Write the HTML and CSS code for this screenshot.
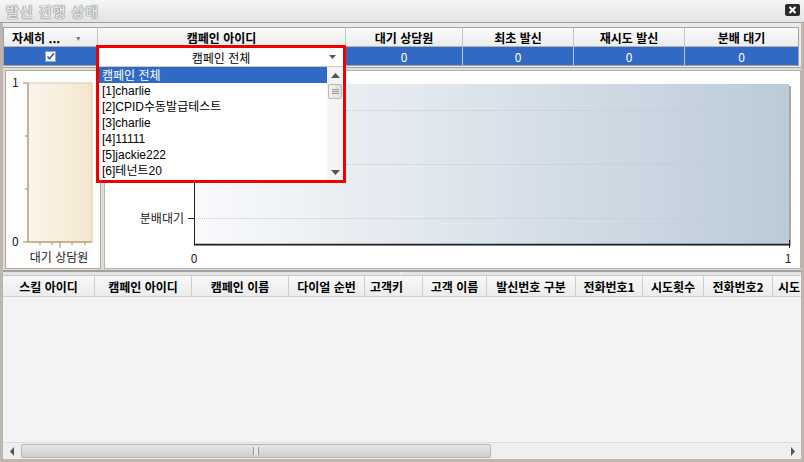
FILE: index.html
```html
<!DOCTYPE html>
<html lang="ko">
<head>
  <meta charset="UTF-8">
  <title>발신 진행 상태</title>
  <link rel="stylesheet" href="styles.css">
</head>
<body>
  <div class="window">
    <div class="titlebar">
      <span class="title">발신 진행 상태</span>
      <span class="close-btn">
        <svg width="15" height="12" viewBox="0 0 15 12"><rect x="0" y="0" width="15" height="12" rx="2" fill="#2b2b2b"/><path d="M4.5 3 L10.5 9 M10.5 3 L4.5 9" stroke="#fff" stroke-width="2"/></svg>
      </span>
    </div>

    <div class="frame">
      <div class="summary">
        <div class="row head">
          <div class="cell detail-col">자세히 ... <span class="sort">▾</span></div>
          <div class="cell">캠페인 아이디</div>
          <div class="cell">대기 상담원</div>
          <div class="cell">최초 발신</div>
          <div class="cell">재시도 발신</div>
          <div class="cell">분배 대기</div>
        </div>
        <div class="row data">
          <div class="cell"><span class="check">
            <svg width="9" height="9" viewBox="0 0 9 9"><path d="M1.5 4.5 L3.5 6.8 L7.8 1.6" stroke="#2a55b8" stroke-width="1.6" fill="none"/></svg>
          </span></div>
          <div class="cell"></div>
          <div class="cell">0</div>
          <div class="cell">0</div>
          <div class="cell">0</div>
          <div class="cell">0</div>
        </div>
      </div>

      <div class="charts">
        <div class="side-panel">
          <svg width="94" height="196" viewBox="0 0 94 196">
            <defs>
              <linearGradient id="beige" x1="0" y1="0" x2="1" y2="0">
                <stop offset="0" stop-color="#fbf6ec"/>
                <stop offset="1" stop-color="#f4e6cd"/>
              </linearGradient>
            </defs>
            <rect x="22" y="12" width="64" height="159" fill="url(#beige)" stroke="#dcc9a6"/>
            <line x1="22" y1="12" x2="22" y2="171" stroke="#a8895a"/>
            <line x1="17" y1="12" x2="22" y2="12" stroke="#a8895a"/>
            <line x1="19" y1="65" x2="22" y2="65" stroke="#a8895a"/>
            <line x1="19" y1="118" x2="22" y2="118" stroke="#a8895a"/>
            <line x1="17" y1="171" x2="86" y2="171" stroke="#a8895a"/>
            <line x1="34" y1="171" x2="34" y2="174" stroke="#a8895a"/>
            <line x1="46" y1="171" x2="46" y2="174" stroke="#a8895a"/>
            <line x1="54" y1="171" x2="54" y2="177" stroke="#a8895a"/>
            <line x1="66" y1="171" x2="66" y2="174" stroke="#a8895a"/>
            <line x1="79" y1="171" x2="79" y2="174" stroke="#a8895a"/>
            <text x="6" y="16" class="axis-text">1</text>
            <text x="6" y="175" class="axis-text">0</text>
            <text x="53" y="191" class="axis-text" text-anchor="middle">대기 상담원</text>
          </svg>
        </div>
        <div class="main-panel">
          <svg width="694" height="198" viewBox="0 0 694 198">
            <defs>
              <linearGradient id="plot" x1="0" y1="0" x2="1" y2="0">
                <stop offset="0" stop-color="#f9fafc"/>
                <stop offset="1" stop-color="#bccbd9"/>
              </linearGradient>
            </defs>
            <rect x="91" y="15" width="595" height="160" fill="#a6a6a6"/>
            <rect x="89" y="13" width="595" height="160" fill="url(#plot)"/>
            <line x1="89" y1="39.5" x2="684" y2="39.5" class="grid-line"/>
            <line x1="89" y1="93.5" x2="684" y2="93.5" class="grid-line"/>
            <line x1="89" y1="147.5" x2="684" y2="147.5" class="grid-line"/>
            <line x1="89.5" y1="13" x2="89.5" y2="175" stroke="#222"/>
            <line x1="89" y1="173.5" x2="685" y2="173.5" stroke="#222" stroke-width="1.5"/>
            <line x1="684.5" y1="169" x2="684.5" y2="177" stroke="#222"/>
            <line x1="83" y1="39.5" x2="89" y2="39.5" stroke="#222"/>
            <line x1="83" y1="93.5" x2="89" y2="93.5" stroke="#222"/>
            <line x1="83" y1="147.5" x2="89" y2="147.5" stroke="#222"/>
            <text x="79" y="152" class="axis-text" text-anchor="end">분배대기</text>
            <text x="89" y="192" class="axis-text" text-anchor="middle">0</text>
            <text x="683" y="192" class="axis-text" text-anchor="middle">1</text>
          </svg>
        </div>
      </div>

      <div class="splitter"><span class="grip"></span></div>

      <div class="detail">
        <div class="detail-head">
          <div class="hcell w90">스킬 아이디</div>
          <div class="hcell w97">캠페인 아이디</div>
          <div class="hcell w97">캠페인 이름</div>
          <div class="hcell w76">다이얼 순번</div>
          <div class="hcell w58 left">고객키</div>
          <div class="hcell w64">고객 이름</div>
          <div class="hcell w89">발신번호 구분</div>
          <div class="hcell w67">전화번호1</div>
          <div class="hcell w61">시도횟수</div>
          <div class="hcell w69">전화번호2</div>
          <div class="hcell w40 left">시도</div>
        </div>
        <div class="detail-body"></div>
        <div class="hscroll">
          <span class="arrow">
            <svg width="5" height="9" viewBox="0 0 5 9"><path d="M4 0 L0 4.5 L4 9 Z" fill="#555"/></svg>
          </span>
          <span class="track">
            <span class="thumb"><span class="thumb-grip"></span></span>
          </span>
          <span class="arrow">
            <svg width="5" height="9" viewBox="0 0 5 9"><path d="M1 0 L5 4.5 L1 9 Z" fill="#555"/></svg>
          </span>
        </div>
      </div>
    </div>

    <div class="campaign-drop">
      <div class="combo">
        <span class="combo-text">캠페인 전체</span>
        <span class="combo-arrow">
          <svg width="7" height="4" viewBox="0 0 7 4"><path d="M0 0 L7 0 L3.5 4 Z" fill="#555"/></svg>
        </span>
      </div>
      <div class="list">
        <ul class="items">
          <li class="selected">캠페인 전체</li>
          <li>[1]charlie</li>
          <li>[2]CPID수동발급테스트</li>
          <li>[3]charlie</li>
          <li>[4]11111</li>
          <li>[5]jackie222</li>
          <li>[6]테넌트20</li>
        </ul>
        <div class="vscroll">
          <span class="vbtn">
            <svg width="9" height="5" viewBox="0 0 9 5"><path d="M0 5 L4.5 0 L9 5 Z" fill="#555"/></svg>
          </span>
          <span class="vthumb">
            <svg width="7" height="5" viewBox="0 0 7 5"><path d="M0 0.5 H7 M0 2.5 H7 M0 4.5 H7" stroke="#999"/></svg>
          </span>
          <span class="vtrack"></span>
          <span class="vbtn">
            <svg width="9" height="5" viewBox="0 0 9 5"><path d="M0 0 L9 0 L4.5 5 Z" fill="#555"/></svg>
          </span>
        </div>
      </div>
    </div>
  </div>
</body>
</html>
```

FILE: styles.css
```css
* {
  box-sizing: border-box;
}
body {
  margin: 0;
  font-family: "Noto Sans CJK KR", "DejaVu Sans", sans-serif;
  font-size: 12px;
  color: #000;
  background: #fff;
}
.window {
  position: relative;
  width: 804px;
  height: 462px;
  background: #ececec;
  overflow: hidden;
}
.titlebar {
  height: 23px;
  display: flex;
  align-items: center;
  justify-content: space-between;
  padding: 0 4px 0 6px;
  background: linear-gradient(#f6f6f6, #e3e3e3);
  border-bottom: 1px solid #9e9e9e;
}
.title {
  font-size: 14px;
  font-weight: bold;
  color: #e6e6e6;
  text-shadow: 0 0 1px #6a6a6a, 0 0 1px #6a6a6a;
  letter-spacing: 1px;
}
.close-btn {
  display: flex;
  margin-top: -3px;
}
.frame {
  height: 439px;
  padding: 4px 0 0 0;
  border-left: 3px solid #bdb6ae;
  border-right: 3px solid #bdb6ae;
  border-bottom: 3px solid #bdb6ae;
  display: flex;
  flex-direction: column;
  background: #e9e9e9;
}
.summary {
  border: 1px solid #a4a4a4;
  margin-right: 2px;
  background: #fff;
}
.row {
  display: grid;
  grid-template-columns: 94px 248px 117px 111px 111px 113px;
}
.row .cell {
  display: flex;
  align-items: center;
  justify-content: center;
  border-right: 1px solid #c4c4c4;
}
.row .cell:last-child {
  border-right: none;
}
.head {
  height: 19px;
  background: linear-gradient(#fbfbfb, #ececec);
  border-bottom: 1px solid #b4b4b4;
  font-weight: bold;
}
.head .detail-col {
  justify-content: flex-start;
  padding-left: 8px;
}
.sort {
  font-size: 8px;
  color: #777;
  margin-left: 16px;
  font-weight: normal;
}
.data {
  height: 18px;
  background: #316ac5;
  color: #fff;
}
.data .cell {
  border-right-color: #b7c8e6;
}
.check {
  display: flex;
  align-items: center;
  justify-content: center;
  width: 11px;
  height: 11px;
  background: #fff;
  border: 1px solid #8aa2cc;
}
.charts {
  height: 203px;
  display: flex;
  gap: 3px;
  padding: 2px 0 1px 2px;
  border-top: 1px solid #a8a8a8;
  margin-top: 1px;
  background: #dcdcdc;
}
.side-panel {
  width: 96px;
  border: 1px solid #b9a78c;
  background: #fdfdfd;
}
.main-panel {
  flex: 1;
  border: 1px solid #b4b4b4;
  background: #fff;
}
.side-panel svg,
.main-panel svg {
  display: block;
}
.axis-text {
  font-family: "Noto Sans CJK KR", "DejaVu Sans", sans-serif;
  font-size: 12px;
  fill: #222;
}
.grid-line {
  stroke: #c4c8cc;
  stroke-dasharray: 1 1;
}
.splitter {
  position: relative;
  height: 6px;
  border-top: 2px solid #a0a0a0;
  background: #e4e4e4;
  border-bottom: 1px solid #c8c8c8;
}
.grip {
  position: absolute;
  left: 398px;
  top: 0;
  width: 1px;
  height: 3px;
  background: #fff;
}
.detail {
  flex: 1;
  display: flex;
  flex-direction: column;
  background: #f3f3f3;
}
.detail-head {
  height: 21px;
  display: flex;
  border-bottom: 1px solid #d2d2d2;
  background: linear-gradient(#f8f8f8, #ececec);
  font-weight: bold;
  overflow: hidden;
  white-space: nowrap;
}
.hcell {
  flex: none;
  display: flex;
  align-items: center;
  justify-content: center;
  border-right: 1px solid #cfcfcf;
}
.hcell.left {
  justify-content: flex-start;
  padding-left: 5px;
}
.w90 { width: 92px; }
.w97 { width: 97px; }
.w76 { width: 76px; }
.w58 { width: 58px; }
.w64 { width: 64px; }
.w89 { width: 89px; }
.w67 { width: 67px; }
.w61 { width: 61px; }
.w69 { width: 69px; }
.w40 { width: 40px; }
.detail-body {
  flex: 1;
}
.hscroll {
  height: 17px;
  display: flex;
  align-items: stretch;
  border-top: 1px solid #dcdcdc;
  background: #efefef;
}
.arrow {
  width: 18px;
  display: flex;
  align-items: center;
  justify-content: center;
}
.track {
  flex: 1;
  display: flex;
  padding: 1px 0;
}
.thumb {
  width: 470px;
  display: flex;
  align-items: center;
  justify-content: center;
  border: 1px solid #b5b5b5;
  border-radius: 2px;
  background: linear-gradient(#e6e6e6, #cfcfcf);
}
.thumb-grip {
  width: 6px;
  height: 8px;
  border-left: 1px solid #9a9a9a;
  border-right: 1px solid #9a9a9a;
  background: #e8e8e8;
}
.campaign-drop {
  position: absolute;
  left: 96px;
  top: 45px;
  width: 250px;
  height: 138px;
  border: 3px solid #f00000;
  background: #fff;
  display: flex;
  flex-direction: column;
}
.combo {
  height: 18px;
  display: flex;
  align-items: center;
  justify-content: center;
  position: relative;
  background: #fff;
}
.combo-arrow {
  position: absolute;
  right: 7px;
  top: 7px;
  display: flex;
}
.list {
  flex: 1;
  display: flex;
  border-top: 1px solid #c9c9c9;
}
.items {
  flex: 1;
  list-style: none;
  margin: 0;
  padding: 0;
  font-family: "Liberation Sans", "Noto Sans CJK KR", sans-serif;
  font-size: 12px;
}
.items li {
  height: 16px;
  line-height: 16px;
  padding-left: 3px;
  white-space: nowrap;
}
.items li.selected {
  background: #316ac5;
  color: #fff;
  font-family: "Noto Sans CJK KR", sans-serif;
}
.vscroll {
  width: 16px;
  display: flex;
  flex-direction: column;
  background: #f4f4f4;
}
.vbtn {
  height: 16px;
  display: flex;
  align-items: center;
  justify-content: center;
}
.vthumb {
  height: 15px;
  margin: 1px 1px 0;
  display: flex;
  align-items: center;
  justify-content: center;
  border: 1px solid #b8b8b8;
  border-radius: 2px;
  background: linear-gradient(90deg, #f2f2f2, #dedede);
}
.vtrack {
  flex: 1;
}
```
